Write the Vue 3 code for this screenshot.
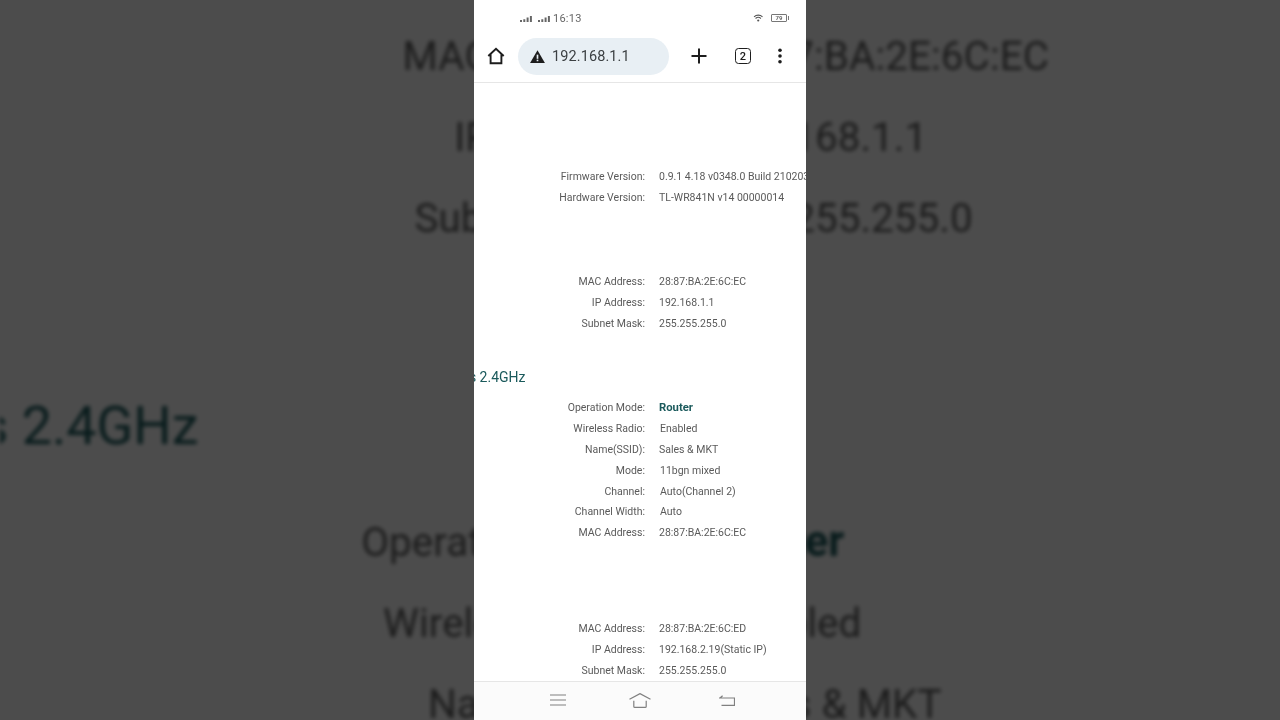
<script setup>
const sections = [
  {
    id: 'device',
    gap: 'first',
    rows: [
      { label: 'Firmware Version:', value: '0.9.1 4.18 v0348.0 Build 210203' },
      { label: 'Hardware Version:', value: 'TL-WR841N v14 00000014' },
    ],
  },
  {
    id: 'lan',
    gap: 'lan',
    rows: [
      { label: 'MAC Address:', value: '28:87:BA:2E:6C:EC' },
      { label: 'IP Address:', value: '192.168.1.1' },
      { label: 'Subnet Mask:', value: '255.255.255.0' },
    ],
  },
  {
    id: 'wireless',
    gap: 'wireless',
    heading: 'Wireless 2.4GHz',
    rows: [
      { label: 'Operation Mode:', value: 'Router', strong: true },
      { label: 'Wireless Radio:', value: 'Enabled', nudge: true },
      { label: 'Name(SSID):', value: 'Sales & MKT' },
      { label: 'Mode:', value: '11bgn mixed', nudge: true },
      { label: 'Channel:', value: 'Auto(Channel 2)', nudge: true },
      { label: 'Channel Width:', value: 'Auto', nudge: true },
      { label: 'MAC Address:', value: '28:87:BA:2E:6C:EC' },
    ],
  },
  {
    id: 'wan',
    gap: 'wan',
    rows: [
      { label: 'MAC Address:', value: '28:87:BA:2E:6C:ED' },
      { label: 'IP Address:', value: '192.168.2.19(Static IP)' },
      { label: 'Subnet Mask:', value: '255.255.255.0' },
    ],
  },
]
</script>

<template>
  <div class="stage">
    <div class="backdrop" aria-hidden="true">
      <div class="sheet">
        <div class="content backdrop-content">
          <section v-for="s in sections" :key="s.id" class="section" :class="s.gap">
            <h2 v-if="s.heading" class="heading"><span>{{ s.heading }}</span></h2>
            <div v-for="r in s.rows" :key="r.label" class="row">
              <span class="label">{{ r.label }}</span>
              <span class="value" :class="{ strong: r.strong, nudge: r.nudge }">{{ r.value }}</span>
            </div>
          </section>
        </div>
      </div>
    </div>

    <main class="phone">
      <header class="status">
        <div class="status-left">
          <svg class="signal" viewBox="0 0 12 6" width="12" height="6">
            <path d="M0 4h2v2H0zM3.300 3.200h2V6h-2zM6.600 1.600h2V6h-2zM9.900 0h2v6h-2z" />
          </svg>
          <svg class="signal" viewBox="0 0 12 6" width="12" height="6">
            <path d="M0 4h2v2H0zM3.300 3.200h2V6h-2zM6.600 1.600h2V6h-2zM9.900 0h2v6h-2z" />
          </svg>
          <span class="time">16:13</span>
        </div>
        <div class="status-right">
          <svg class="wifi" viewBox="0 0 12 9" width="11" height="8">
            <path d="M1 3.200a7 7 0 0 1 9.500 0M2.700 5a4.500 4.500 0 0 1 6 0" />
            <circle cx="5.700" cy="7.300" r="1.200" />
          </svg>
          <span class="battery"><span class="battery-level">79</span></span>
        </div>
      </header>

      <nav class="toolbar">
        <svg class="home" viewBox="0 0 20 20" width="20" height="20">
          <path d="M2.300 10 10 2.800 17.700 10M4.600 8.300V17.300h10.800V8.300" />
        </svg>
        <div class="omnibox">
          <svg class="warn" viewBox="0 0 16 14" width="15" height="13">
            <path d="M8 0.200 16 14H0z" />
            <rect x="7.100" y="5" width="1.800" height="4.500" fill="#e8eff4" />
            <rect x="7.100" y="10.400" width="1.800" height="1.700" fill="#e8eff4" />
          </svg>
          <span class="url">192.168.1.1</span>
        </div>
        <svg class="plus" viewBox="0 0 16 16" width="16" height="16">
          <path d="M8 0.500V15.500M0.500 8H15.500" />
        </svg>
        <span class="tabs">2</span>
        <svg class="more" viewBox="0 0 4 16" width="4" height="16">
          <circle cx="2" cy="2.200" r="1.800" />
          <circle cx="2" cy="8" r="1.800" />
          <circle cx="2" cy="13.800" r="1.800" />
        </svg>
      </nav>

      <div class="content">
        <section v-for="s in sections" :key="s.id" class="section" :class="s.gap">
          <h2 v-if="s.heading" class="heading"><span>{{ s.heading }}</span></h2>
          <div v-for="r in s.rows" :key="r.label" class="row">
            <span class="label">{{ r.label }}</span>
            <span class="value" :class="{ strong: r.strong, nudge: r.nudge }">{{ r.value }}</span>
          </div>
        </section>
      </div>

      <footer class="navbar">
        <svg class="nav-menu" viewBox="0 0 16 12" width="16" height="12">
          <path d="M0 1H16M0 6H16M0 11H16" />
        </svg>
        <svg class="nav-home" viewBox="0 0 22 15" width="22" height="15">
          <path d="M0.500 6.300 11 0.600 21.500 6.300M4.800 7.800V13.400Q4.800 14.400 5.800 14.400H16.200Q17.200 14.400 17.200 13.400V7.800" />
        </svg>
        <svg class="nav-back" viewBox="0 0 16 11" width="16" height="11">
          <path d="M0 3H15.500V10.300H2.500M3.600 0.700 1 3" />
        </svg>
      </footer>
    </main>
  </div>
</template>

<style>
html, body {
  margin: 0;
  background: #4c4c4c;
}
</style>

<style scoped>
.stage {
  position: relative;
  width: 1280px;
  height: 720px;
  overflow: hidden;
  display: flex;
  justify-content: center;
  background: #4c4c4c;
  font-family: Roboto, "Liberation Sans", sans-serif;
}

/* Enlarged, dimmed copy of the page lying behind the phone. */
.backdrop {
  position: absolute;
  inset: 0;
  overflow: hidden;
}
.sheet {
  position: absolute;
  left: 474px;
  top: -1.500px;
  width: 332px;
  height: 720px;
  overflow: hidden;
  background: #fff;
  transform: scale(3.855);
  transform-origin: 50% 50%;
  filter: blur(0.55px) brightness(0.3);
}
.backdrop-content {
  margin-top: 83px;
}

.phone {
  position: relative;
  width: 332px;
  height: 720px;
  display: flex;
  flex-direction: column;
  background: #fff;
  filter: blur(0.3px);
}

.status {
  height: 33px;
  box-sizing: border-box;
  padding: 3px 18px 0 46px;
  flex: none;
  display: flex;
  align-items: center;
  justify-content: space-between;
  color: #666;
}
.status-left {
  display: flex;
  align-items: center;
  gap: 6px;
}
.status-left .time {
  margin-left: -3px;
  font-size: 11px;
  letter-spacing: 0.25px;
}
.signal {
  fill: #666;
  margin-top: 2px;
}
.status-right {
  display: flex;
  align-items: center;
  gap: 7px;
  margin-right: 1px;
}
.wifi {
  fill: #555;
  stroke: none;
}
.wifi path {
  fill: none;
  stroke: #555;
  stroke-width: 1.300;
}
.battery {
  position: relative;
  box-sizing: border-box;
  width: 16px;
  height: 8px;
  border: 1px solid #777;
  border-radius: 1px;
  display: flex;
  align-items: center;
  justify-content: center;
}
.battery::after {
  content: "";
  position: absolute;
  right: -3px;
  top: 1px;
  width: 1px;
  height: 4px;
  background: #777;
}
.battery-level {
  font-size: 6px;
  font-weight: 700;
  line-height: 1;
  color: #666;
}

.toolbar {
  height: 46px;
  flex: none;
  display: flex;
  align-items: center;
  padding: 0 0 3px 12px;
  border-bottom: 1px solid #e6e6e6;
  box-sizing: content-box;
}
.home {
  flex: none;
  fill: none;
  stroke: #1d1d1d;
  stroke-width: 1.900;
}
.omnibox {
  width: 151px;
  height: 37px;
  flex: none;
  margin-left: 12px;
  border-radius: 18.500px;
  background: #e8eff4;
  display: flex;
  align-items: center;
  padding-left: 12px;
  box-sizing: border-box;
  gap: 7px;
}
.warn {
  fill: #1d1d1d;
  flex: none;
}
.url {
  font-size: 14.500px;
  color: #3c4043;
  letter-spacing: 0.1px;
}
.plus {
  flex: none;
  margin-left: 22px;
  fill: none;
  stroke: #1d1d1d;
  stroke-width: 2;
}
.tabs {
  flex: none;
  margin-left: 28px;
  box-sizing: border-box;
  width: 16px;
  height: 16px;
  border: 1.800px solid #1d1d1d;
  border-radius: 3.500px;
  font-size: 11px;
  font-weight: 500;
  color: #1d1d1d;
  display: flex;
  align-items: center;
  justify-content: center;
}
.more {
  flex: none;
  margin-left: 27px;
  fill: #1d1d1d;
}

.content {
  flex: 1;
  min-height: 0;
  overflow: hidden;
  font-size: 10.500px;
  color: #5a5a5a;
}
.section.first { margin-top: 83.400px; }
.section.lan { margin-top: 63px; }
.section.wireless { margin-top: 31px; }
.section.wan { margin-top: 74.900px; }

.heading {
  width: 51.500px;
  height: 24px;
  margin: 0 0 8.600px;
  display: flex;
  justify-content: flex-end;
  align-items: center;
  white-space: nowrap;
  font-size: 14px;
  font-weight: 400;
  color: #1b5a5c;
}
.row {
  display: grid;
  grid-template-columns: 171px 1fr;
  column-gap: 14px;
  height: 20.850px;
  align-items: center;
  white-space: nowrap;
}
.label {
  text-align: right;
}
.value.nudge {
  margin-left: 1px;
}
.value.strong {
  font-size: 11.300px;
  font-weight: 700;
  color: #1b5a5c;
}

.navbar {
  height: 38px;
  box-sizing: content-box;
  flex: none;
  display: flex;
  align-items: center;
  padding: 0 0 0 76px;
  background: #fbfbfb;
  border-top: 1px solid #e6e6e6;
}
.navbar svg {
  fill: none;
  stroke: #808080;
  stroke-width: 1.200;
  flex: none;
  margin-bottom: 2px;
}
.navbar .nav-home {
  margin-left: 63px;
}
.navbar .nav-back {
  margin-left: 68px;
}
</style>
